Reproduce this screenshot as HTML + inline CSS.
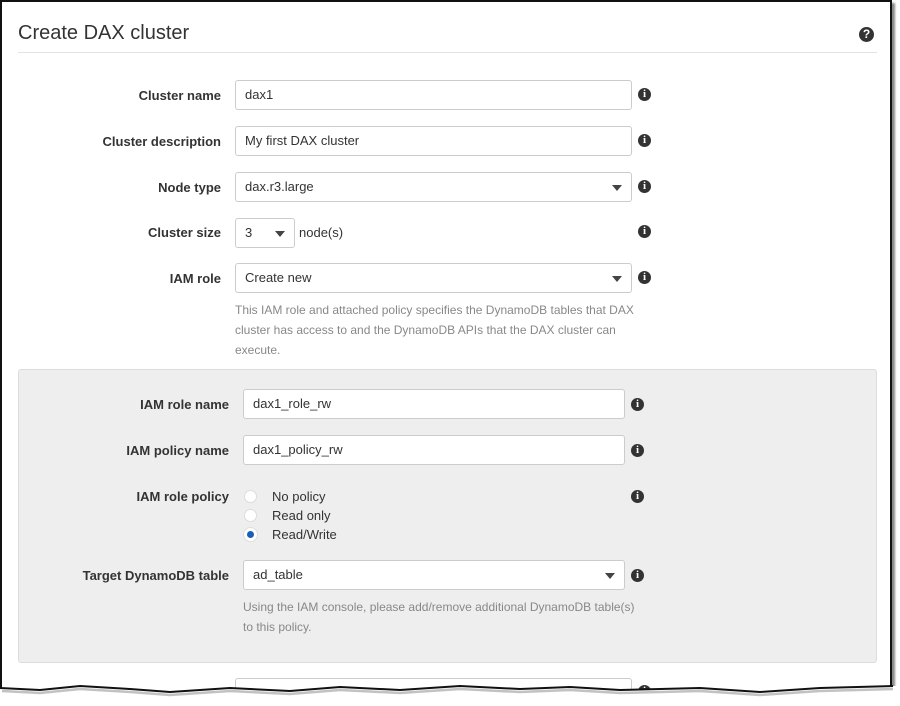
<!DOCTYPE html>
<html style="overflow:hidden;width:900px;height:706px"><head><style>
html,body{overflow:hidden}
body{margin:0;width:900px;height:706px;background:#fff;position:relative;overflow:hidden;font-family:"Liberation Sans",Arial,sans-serif;color:#333}
.frame{position:absolute;left:0;top:0;width:888px;height:696px;border:2px solid #111;border-bottom:none;box-shadow:3px 3px 2px #888;background:#fff}
.abs{position:absolute}
.title{left:18px;top:22px;font-size:20px;color:#333}
.hr{left:18px;top:52px;width:859px;height:1px;background:#e3e3e3}
.lbl{position:absolute;font-weight:bold;font-size:13px;text-align:right;color:#333}
.inp{position:absolute;border:1px solid #ccc;border-radius:3px;background:#fff;font-size:13px;line-height:28px;padding-left:9px;box-sizing:border-box;height:30px;color:#333}
.car{position:absolute;right:9px;top:12px;width:0;height:0;border-left:5px solid transparent;border-right:5px solid transparent;border-top:6px solid #444}
.info{position:absolute;width:13px;height:13px;border-radius:50%;background:#333;color:#fff;font:bold 11px/13px "Liberation Serif",serif;text-align:center}
.help{position:absolute;font-size:12px;color:#888;line-height:20px}
.panel{left:18px;top:369px;width:857px;height:292px;background:#eee;border:1px solid #ddd;border-radius:3px}
.radio{position:absolute;width:13px;height:13px;border-radius:50%;background:#fff;border:1px solid #ddd;box-sizing:border-box}
.rt{position:absolute;font-size:13px}
.tear{position:absolute;left:0;top:682px;width:900px;height:24px}
</style></head><body>
<div class="frame"></div>
<div class="abs title">Create DAX cluster</div>
<div class="abs hr"></div>
<div class="info" style="left:859px;top:27px;width:15px;height:15px;line-height:15px;font-family:'Liberation Sans';font-size:12px">?</div>

<div class="lbl" style="right:679px;top:88px">Cluster name</div>
<div class="inp" style="left:235px;top:80px;width:397px">dax1</div>
<div class="info" style="left:638px;top:88px">i</div>

<div class="lbl" style="right:679px;top:134px">Cluster description</div>
<div class="inp" style="left:235px;top:126px;width:397px">My first DAX cluster</div>
<div class="info" style="left:638px;top:134px">i</div>

<div class="lbl" style="right:679px;top:180px">Node type</div>
<div class="inp" style="left:235px;top:172px;width:397px">dax.r3.large<div class="car"></div></div>
<div class="info" style="left:638px;top:180px">i</div>

<div class="lbl" style="right:679px;top:225px">Cluster size</div>
<div class="inp" style="left:235px;top:218px;width:60px">3<div class="car"></div></div>
<div class="rt" style="left:299px;top:225px">node(s)</div>
<div class="info" style="left:638px;top:225px">i</div>

<div class="lbl" style="right:679px;top:271px">IAM role</div>
<div class="inp" style="left:235px;top:263px;width:397px">Create new<div class="car"></div></div>
<div class="info" style="left:638px;top:271px">i</div>
<div class="help" style="left:235px;top:300px;width:400px">This IAM role and attached policy specifies the DynamoDB tables that DAX cluster has access to and the DynamoDB APIs that the DAX cluster can execute.</div>

<div class="abs panel"></div>
<div class="lbl" style="right:671px;top:397px">IAM role name</div>
<div class="inp" style="left:243px;top:389px;width:382px">dax1_role_rw</div>
<div class="info" style="left:631px;top:398px">i</div>

<div class="lbl" style="right:671px;top:443px">IAM policy name</div>
<div class="inp" style="left:243px;top:435px;width:382px">dax1_policy_rw</div>
<div class="info" style="left:631px;top:444px">i</div>

<div class="lbl" style="right:671px;top:489px">IAM role policy</div>
<div class="radio" style="left:244px;top:490px"></div><div class="rt" style="left:272px;top:489px">No policy</div>
<div class="radio" style="left:244px;top:509px"></div><div class="rt" style="left:272px;top:508px">Read only</div>
<div class="radio" style="left:244px;top:528px;border:3px solid #fff;background:#1a5eb8;box-shadow:0 0 0 1px #ddd"></div><div class="rt" style="left:272px;top:527px">Read/Write</div>
<div class="info" style="left:631px;top:490px">i</div>

<div class="lbl" style="right:671px;top:568px">Target DynamoDB table</div>
<div class="inp" style="left:243px;top:560px;width:382px">ad_table<div class="car"></div></div>
<div class="info" style="left:631px;top:569px">i</div>
<div class="help" style="left:243px;top:597px;width:400px">Using the IAM console, please add/remove additional DynamoDB table(s) to this policy.</div>

<div class="inp" style="left:235px;top:678px;width:397px"></div>
<div class="info" style="left:638px;top:685px">i</div>
<svg class="tear" viewBox="0 0 900 24" width="900" height="24">
<path d="M0 6 L40 8 L80 4 L130 7 L170 10 L230 6 L290 9 L340 5 L400 8 L460 4 L520 7 L570 5 L620 8 L700 6 L760 10 L820 6 L893 4 L900 4 L900 24 L0 24 Z" fill="#fff"/>
<path d="M2 9 L40 11 L80 7 L130 10 L170 13 L230 9 L290 12 L340 8 L400 11 L460 7 L520 10 L570 8 L620 11 L700 9 L760 13 L820 9 L893 7" fill="none" stroke="#999" stroke-width="2.5" opacity=".6"/>
<path d="M0 6 L40 8 L80 4 L130 7 L170 10 L230 6 L290 9 L340 5 L400 8 L460 4 L520 7 L570 5 L620 8 L700 6 L760 10 L820 6 L893 4" fill="none" stroke="#111" stroke-width="2"/>
</svg>
</body></html>
